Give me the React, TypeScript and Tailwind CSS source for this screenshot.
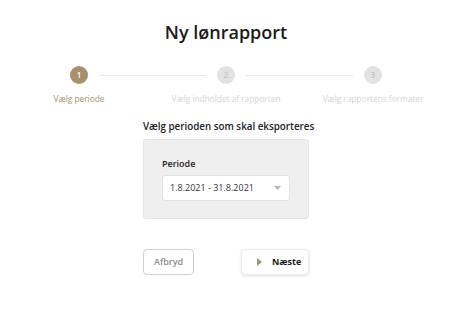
import React from 'react';

const steps = [
  { n: 1, label: 'Vælg periode', active: true },
  { n: 2, label: 'Vælg indholdet af rapporten', active: false },
  { n: 3, label: 'Vælg rapportens formater', active: false },
];

const App: React.FC = () => {
  return (
    <div className="w-[452px] bg-white pt-[19px] font-['Open_Sans',sans-serif] text-[#1a1a1a]">
      <h1 className="text-center text-[18px] font-semibold leading-[26px]">Ny lønrapport</h1>

      {/* Stepper */}
      <div className="mx-auto mt-[21px] grid w-[441px] grid-cols-3">
        {steps.map((s, i) => (
          <div key={s.n} className="relative flex flex-col items-center">
            {i < steps.length - 1 && (
              <div className="absolute left-[calc(50%+20px)] right-[calc(-50%+20px)] top-[9px] h-px bg-[#e8e8e8]" />
            )}
            <div
              className={
                s.active
                  ? 'flex h-[18px] w-[18px] items-center justify-center rounded-full bg-[#a88f6e] text-[8px] font-semibold text-white'
                  : 'flex h-[18px] w-[18px] items-center justify-center rounded-full bg-[#e2e2e2] text-[8px] font-semibold text-[#c4c4c4]'
              }
            >
              {s.n}
            </div>
            <div
              className={
                s.active
                  ? 'mt-[9px] whitespace-nowrap text-[8.3px] leading-[12px] text-[#a8916f]'
                  : 'mt-[9px] whitespace-nowrap text-[8.3px] leading-[12px] text-[#d4d4d4]'
              }
            >
              {s.label}
            </div>
          </div>
        ))}
      </div>

      {/* Period section */}
      <div className="mx-auto mt-[15px] w-[166px]">
        <div className="whitespace-nowrap text-[9.8px] font-semibold leading-[14px] text-[#222]">
          Vælg perioden som skal eksporteres
        </div>
        <div className="mt-[5px] h-[80px] rounded-[3px] border border-[#e3e3e3] bg-[#efefef] px-[18px] pt-[17px]">
          <div className="text-[9px] font-semibold leading-[13px] text-[#222]">Periode</div>
          <div className="mt-[5px] flex h-[26px] items-center justify-between rounded-[3px] border border-[#e2e2e2] bg-white pl-[7px] pr-[8px]">
            <span className="text-[9px] text-[#333]">1.8.2021 - 31.8.2021</span>
            <svg width="7" height="4" viewBox="0 0 7 4">
              <path d="M0 0 L7 0 L3.5 4 Z" fill="#b5b5b5" />
            </svg>
          </div>
        </div>
      </div>

      {/* Buttons */}
      <div className="mx-auto mt-[30px] flex w-[166px] items-center justify-between pb-[53px]">
        <button className="h-[26px] w-[51px] rounded-[4px] border border-[#cfcfcf] bg-white text-[9px] font-semibold text-[#8c8c8c]">
          Afbryd
        </button>
        <button className="flex h-[26px] w-[68px] items-center rounded-[4px] border border-[#ececec] bg-white pl-[15px] shadow-[0_1px_3px_rgba(0,0,0,0.12)]">
          <svg width="5" height="8" viewBox="0 0 5 8">
            <path d="M0 0 L5 4 L0 8 Z" fill="#a88f6e" />
          </svg>
          <span className="ml-[10px] text-[9px] font-bold text-[#1a1a1a]">Næste</span>
        </button>
      </div>
    </div>
  );
};

export default App;
